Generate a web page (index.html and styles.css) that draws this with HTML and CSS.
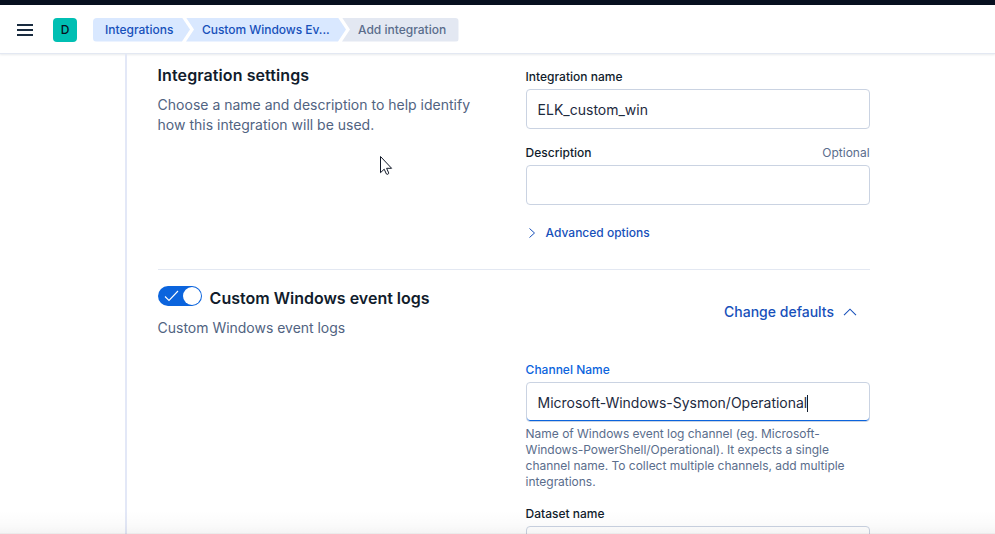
FILE: index.html
```html
<!DOCTYPE html>
<html lang="en">
<head>
<meta charset="utf-8">
<title>Add integration</title>
<link rel="stylesheet" href="styles.css">
</head>
<body>
<div class="topbar"></div>
<header class="header">
  <svg class="menu" width="16" height="12" viewBox="0 0 16 12"><path d="M0 0h16v2H0zM0 5h16v2H0zM0 10h16v2H0z" fill="#1a2c40"/></svg>
  <div class="space">D</div>
  <nav class="crumbs">
    <a class="crumb first">Integrations</a>
    <a class="crumb middle">Custom Windows Ev...</a>
    <span class="crumb last">Add integration</span>
  </nav>
</header>
<main class="main">
  <div class="panel">
    <section class="row settings">
      <div class="intro">
        <h2 class="title wide">Integration settings</h2>
        <p class="text">Choose a name and description to help identify<br>how this integration will be used.</p>
      </div>
      <div class="fields">
        <div class="label"><span>Integration name</span></div>
        <div class="input">ELK_custom_win</div>
        <div class="label second"><span>Description</span><span class="optional">Optional</span></div>
        <div class="input"></div>
        <a class="advanced"><svg width="12" height="12" viewBox="0 0 12 12"><path d="M3.5 1.5 8.5 6l-5 4.5" fill="none" stroke="#1750ba"/></svg><span>Advanced options</span></a>
      </div>
    </section>
    <section class="logs">
      <div class="row heading">
        <div>
          <div class="switch-row">
            <span class="switch"><svg width="16" height="12" viewBox="0 0 16 12"><path d="m1 6.5 4 4L14 1" fill="none" stroke="#fff" stroke-width="1.1"/></svg><span class="thumb"></span></span>
            <h2 class="title">Custom Windows event logs</h2>
          </div>
          <p class="text">Custom Windows event logs</p>
        </div>
        <a class="defaults"><span>Change defaults</span><svg width="14" height="8" viewBox="0 0 14 8"><path d="M1 7.2 7 1.2l6 6" fill="none" stroke="#1750ba" stroke-width="1.1"/></svg></a>
      </div>
      <div class="fields channel">
        <div class="label active"><span>Channel Name</span></div>
        <div class="input focused">Microsoft-Windows-Sysmon/Operational<i class="caret"></i></div>
        <p class="help">Name of Windows event log channel (eg. Microsoft-<br>Windows-PowerShell/Operational). It expects a single<br>channel name. To collect multiple channels, add multiple<br>integrations.</p>
        <div class="label dataset"><span>Dataset name</span></div>
        <div class="input"></div>
      </div>
    </section>
  </div>
</main>
<div class="bottom-shade"></div>
<svg class="pointer" width="13" height="20" viewBox="0 0 13 20"><path d="M.5.5v16.2l3.7-3.5 2.2 4.8c.7.8 2.7 0 2.3-1.1l-2.1-4.6h5z" fill="#fff" stroke="#111827"/></svg>
</body>
</html>
```
FILE: styles.css
```css
* { box-sizing: border-box; }
body {
  margin: 0;
  height: 534px;
  overflow: hidden;
  display: flex;
  flex-direction: column;
  background: #fff;
  color: #111c2c;
  font: 14px/20px Inter, "Liberation Sans", sans-serif;
}
h2, p { margin: 0; }
svg { display: block; flex: none; }
.topbar { height: 5px; flex: none; background: #07101f; }
.header {
  height: 49px;
  flex: none;
  display: flex;
  align-items: center;
  padding: 1px 0 0 17px;
  border-bottom: 1px solid #e3e8f2;
  box-shadow: 0 1px 2px rgba(43, 57, 79, .1);
}
.space {
  width: 24px;
  height: 24px;
  margin: 0 16px 0 20px;
  border-radius: 4px;
  background: #00bfb3;
  color: #07101f;
  font-size: 12px;
  line-height: 24px;
  text-align: center;
  font-weight: 500;
}
.crumbs { display: flex; font-size: 12px; font-weight: 500; line-height: 24px; }
.crumb { height: 24px; white-space: nowrap; background: #d9e8ff; color: #1750ba; }
.first {
  width: 97px;
  padding-left: 12px;
  border-radius: 4px 0 0 4px;
  clip-path: polygon(0 0, 89px 0, 100% 50%, 89px 100%, 0 100%);
}
.middle {
  width: 160px;
  margin-left: -4px;
  padding-left: 16px;
  letter-spacing: -.04px;
  clip-path: polygon(0 0, 152px 0, 100% 50%, 152px 100%, 0 100%, 8px 50%);
}
.last {
  width: 116.5px;
  margin-left: -4px;
  padding-left: 16px;
  border-radius: 0 4px 4px 0;
  background: #e3e8f2;
  color: #5a6d8c;
  clip-path: polygon(0 0, 100% 0, 100% 100%, 0 100%, 8px 50%);
}
.main { flex: 1; min-height: 0; overflow: hidden; padding-left: 125px; }
.panel { border-left: 2px solid #e3e8f7; padding-left: 30.6px; height: 600px; }
.row { display: flex; justify-content: space-between; width: 712px; }
.settings { height: 216px; padding-top: 11px; border-bottom: 1px solid #e3e8f2; }
.title { font-size: 16px; line-height: 20px; font-weight: 600; white-space: nowrap; }
.wide { letter-spacing: .09px; }
.intro .text { margin-top: 10px; }
.text { color: #516381; white-space: nowrap; }
.fields { width: 344px; }
.label {
  display: flex;
  justify-content: space-between;
  height: 16px;
  margin-top: 4px;
  margin-bottom: 4px;
  font-size: 12px;
  line-height: 16px;
  font-weight: 500;
}
.optional { color: #5a6d8c; font-weight: 400; }
.input {
  display: flex;
  align-items: center;
  height: 40px;
  padding: 2px 11px 0;
  border: 1px solid #cad3e2;
  border-radius: 4px;
  color: #1d2a3e;
}
.second { margin-top: 16px; }
.advanced {
  display: flex;
  align-items: center;
  gap: 8px;
  height: 24px;
  margin-top: 16px;
  color: #1750ba;
  font-size: 12px;
  font-weight: 500;
}
.logs { width: 712px; }
.heading { height: 88px; padding-top: 16px; }
.switch-row { display: flex; align-items: flex-start; gap: 8px; }
.switch-row .title { padding-top: 2px; }
.switch {
  display: flex;
  align-items: center;
  justify-content: space-between;
  width: 44px;
  height: 20px;
  padding: 0 1px 0 6px;
  border-radius: 10px;
  background: #0b64dd;
}
.thumb { width: 18px; height: 18px; border-radius: 50%; background: #fff; }
.heading .text { margin-top: 10px; letter-spacing: -.02px; }
.defaults {
  display: flex;
  align-items: center;
  gap: 9px;
  height: 20px;
  margin: 16px 12.6px 0 0;
  color: #1750ba;
  font-weight: 500;
}
.channel { margin-left: 368px; }
.active { color: #0b64dd; }
.focused { box-shadow: inset 0 -1px #0b64dd; letter-spacing: -.015px; }
.caret { width: 1px; height: 17px; background: #111c2c; }
.help {
  margin-top: 4px;
  color: #5a6d8c;
  font-size: 12px;
  line-height: 16px;
  letter-spacing: -.025px;
  white-space: nowrap;
}
.dataset { margin-top: 16px; }
.bottom-shade {
  position: absolute;
  left: 0;
  right: 0;
  top: 510px;
  height: 24px;
  background: linear-gradient(rgba(0, 0, 0, 0), rgba(0, 0, 0, .015) 60%, rgba(0, 0, 0, .04) 95%, rgba(0, 0, 0, .1));
}
.pointer { position: absolute; left: 380px; top: 156px; }
```
